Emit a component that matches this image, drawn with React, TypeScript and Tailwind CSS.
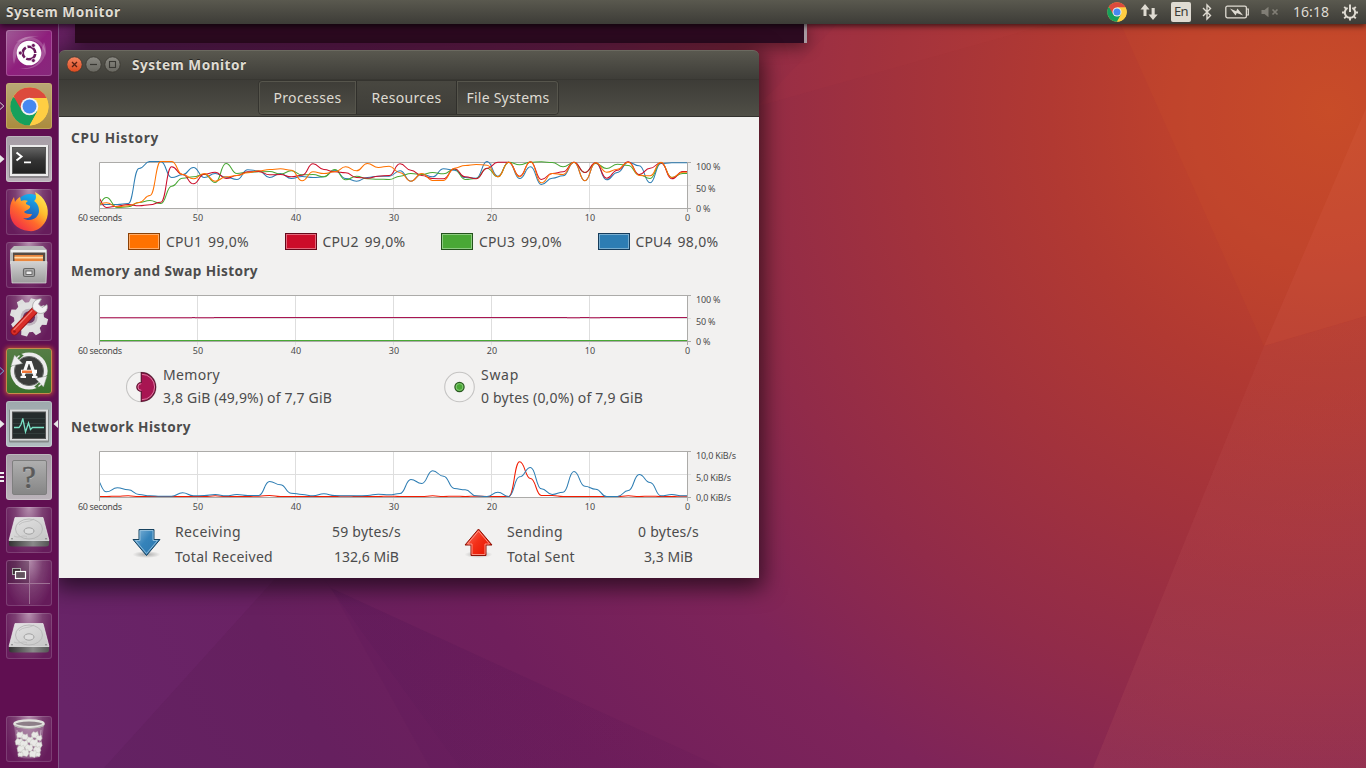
import { useLayoutEffect, useRef, type ReactNode } from "react";

/* Text set to a fixed advance width by adjusting its tracking. */
function Fit({ w, className = "", children }: { w: number; className?: string; children: string }) {
  const ref = useRef<HTMLSpanElement>(null);
  useLayoutEffect(() => {
    const el = ref.current;
    if (!el) return;
    el.style.letterSpacing = "0px";
    const natural = el.getBoundingClientRect().width;
    el.style.letterSpacing = `${(w - natural) / children.length}px`;
  }, [w, children]);
  return (
    <span ref={ref} className={`inline-block whitespace-pre ${className}`}>
      {children}
    </span>
  );
}

/* ---------- wallpaper ---------- */

function Wallpaper() {
  return (
    <svg className="absolute inset-0" width="1366" height="768" viewBox="0 0 1366 768">
      <defs>
        <radialGradient id="wall" gradientUnits="userSpaceOnUse" cx="1330" cy="110" r="1400">
          <stop offset="0" stopColor="#c64a28" />
          <stop offset="0.1" stopColor="#bf422c" />
          <stop offset="0.2" stopColor="#b13932" />
          <stop offset="0.31" stopColor="#a2323c" />
          <stop offset="0.43" stopColor="#912b49" />
          <stop offset="0.55" stopColor="#7e2459" />
          <stop offset="0.7" stopColor="#701f5c" />
          <stop offset="0.85" stopColor="#66205f" />
          <stop offset="1" stopColor="#632263" />
        </radialGradient>
        <linearGradient id="facetA" x1="0" y1="0" x2="0.3" y2="1">
          <stop offset="0" stopColor="#ffffff" stopOpacity="0" />
          <stop offset="1" stopColor="#ff9a80" stopOpacity="0.05" />
        </linearGradient>
        <linearGradient id="facetB" x1="0" y1="0" x2="1" y2="1">
          <stop offset="0" stopColor="#35104a" stopOpacity="0.09" />
          <stop offset="1" stopColor="#35104a" stopOpacity="0" />
        </linearGradient>
      </defs>
      <rect width="1366" height="768" fill="url(#wall)" />
      <polygon points="1110,0 1366,0 1366,108 1264,346" fill="#e0602a" opacity="0.09" />
      <polygon points="1366,108 1264,346 1366,316" fill="#ff8a60" opacity="0.11" />
      <polygon points="1264,346 1366,316 1366,768 1093,768" fill="url(#facetA)" />
      <polygon points="1264,346 1366,316 1366,768 1093,768" fill="#c65a5a" opacity="0.08" />
      <polygon points="860,0 1050,24 758,106" fill="#d05050" opacity="0.05" />
      <polygon points="59,540 310,540 104,768 59,768" fill="#8a2f86" opacity="0.14" />
      <polygon points="310,560 331,588 723,768 460,768" fill="url(#facetB)" />
      <polygon points="331,588 723,768 430,768" fill="#320a40" opacity="0.04" />
    </svg>
  );
}

/* ---------- top panel ---------- */

function ChromeMark({ size }: { size: number }) {
  return (
    <svg width={size} height={size} viewBox="0 0 40 40">
      <circle cx="20" cy="20" r="19.5" fill="#ffce43" />
      <path d="M20 20 L3.1 10.2 A19.5 19.5 0 0 0 20 39.5 L28 25Z" fill="#16a05c" />
      <path d="M3.6 9.5 A19.5 19.5 0 0 1 37.5 11.2 L20 11.2 L12 24Z" fill="#dc4a3d" />
      <path d="M20 11.2 H37.4 A19.5 19.5 0 0 1 20.3 39.5 L28 25Z" fill="#ffce43" />
      <circle cx="20" cy="20" r="9" fill="#f2f2f2" />
      <circle cx="20" cy="20" r="7.1" fill="#4688f1" />
    </svg>
  );
}

function TopPanel() {
  return (
    <header className="relative z-20 flex h-6 items-center bg-linear-to-b from-[#5a594f] to-[#3d3c37] pl-1.5 pr-2 text-[#dfdbd2] shadow-[0_2px_6px_rgba(0,0,0,0.65)]">
      <Fit w={114.5} className="text-[13.6px] leading-6 font-bold text-shadow-[0_-1px_0_rgb(0_0_0/0.5)]">
        System Monitor
      </Fit>
      <div className="ml-auto flex items-center">
        <div className="mr-[13px]">
          <ChromeMark size={20} />
        </div>
        <svg className="mr-[13px]" width="18" height="18" viewBox="0 0 18 18" fill="#dfdbd2">
          <path d="M5 1 L9.5 6.5 H6.5 V13 H3.5 V6.5 H.5Z" />
          <path d="M13 17 L17.7 11.5 H14.7 V5 H11.6 V11.5 H8.5Z" />
        </svg>
        <div className="mr-[11px] flex h-5 w-5 items-center justify-center rounded-xs bg-[#dfdbd2] text-[13px] text-[#3c3b37]">
          <Fit w={14}>En</Fit>
        </div>
        <svg className="mr-[13px]" width="10" height="18" viewBox="0 0 10 18" fill="none" stroke="#dfdbd2" strokeWidth="1.4">
          <path d="M1 5 L8.5 12.5 L5 16 V2 L8.5 5.5 L1 13" />
        </svg>
        <svg className="mr-[11px]" width="25" height="14" viewBox="0 0 25 14">
          <rect x="0.8" y="1.2" width="20.6" height="11.6" rx="1.6" fill="none" stroke="#dfdbd2" strokeWidth="1.3" />
          <path d="M21.5 4 h1.8 v6 h-1.8" fill="none" stroke="#dfdbd2" strokeWidth="1.2" />
          <path d="M5 3.6 L11.2 6.2 L12.4 3.4 L18.2 10.6 L11.8 8 L10.6 10.6Z" fill="#dfdbd2" />
        </svg>
        <svg className="mr-[14px] opacity-60" width="18" height="12" viewBox="0 0 18 12">
          <path d="M0.5 4 H3.5 L7.5 0.8 V11.2 L3.5 8 H0.5Z" fill="#a5a198" />
          <path d="M11.5 3.5 l5 5 m0 -5 l-5 5" stroke="#a5a198" strokeWidth="1.7" />
        </svg>
        <Fit w={36} className="mr-[13px] text-sm leading-6">
          16:18
        </Fit>
        <svg width="16" height="17" viewBox="0 0 16 17" stroke="#dfdbd2" fill="none">
          <path d="M5.6 3.9 A5.2 5.2 0 1 0 10.4 3.9" strokeWidth="2" />
          <path d="M8 0.6 V8" strokeWidth="2" />
          <path d="M0 8.5 H3 M13 8.5 H16 M2.2 14.3 L4.2 12.3 M13.8 14.3 L11.8 12.3 M8 13.8 V16.6 M2.2 2.8 L4.2 4.8 M13.8 2.8 L11.8 4.8" strokeWidth="1.9" />
        </svg>
      </div>
    </header>
  );
}

/* ---------- launcher ---------- */

const DASH = "border-white/20 bg-linear-to-br from-[#a05a97] via-[#8f1f7d] to-[#86287b]";
const PLAIN = "border-white/15 bg-[radial-gradient(ellipse_at_50%_0%,#b58fae_0%,#7c3f72_42%,#661c5b_80%)]";
const SILVER = "border-white/25 bg-linear-to-b from-[#a69da6] to-[#bbb3ba]";

function UbuntuIcon() {
  return (
    <svg width="46" height="46" viewBox="0 0 46 46">
      <path d="M8 34 C3 14 16 3 33 7 C20 6 11 12 11 23" fill="#fff" opacity="0.22" />
      <path d="M38 12 C45 27 31 43 13 38 C27 40 36 32 35 22" fill="#fff" opacity="0.22" />
      <path d="M10 12 C23 1 41 9 40 27 C38 15 29 9 21 10" fill="#fff" opacity="0.18" />
      <circle cx="23" cy="23" r="12.3" fill="#fff" />
      <circle cx="23" cy="23" r="6.3" fill="none" stroke="#6b1a5e" strokeWidth="2.6" strokeDasharray="11.5 1.7" strokeDashoffset="-1" />
      {[180, 60, 300].map((a) => (
        <circle key={a} cx={23 + 8.7 * Math.cos((a * Math.PI) / 180)} cy={23 + 8.7 * Math.sin((a * Math.PI) / 180)} r="2" fill="#6b1a5e" stroke="#fff" strokeWidth="0.7" />
      ))}
    </svg>
  );
}

function TerminalIcon() {
  return (
    <svg width="46" height="46" viewBox="0 0 46 46">
      <defs>
        <linearGradient id="term" x1="0" y1="0" x2="0" y2="1">
          <stop offset="0" stopColor="#646464" />
          <stop offset="0.5" stopColor="#333" />
          <stop offset="1" stopColor="#202020" />
        </linearGradient>
      </defs>
      <rect x="3" y="9" width="40" height="33" rx="1" fill="#8c888c" />
      <rect x="4" y="9" width="38" height="31" fill="#ececec" />
      <rect x="6.5" y="11.5" width="33" height="26" fill="url(#term)" stroke="#555" />
      <path d="M10.5 16.5 L15.5 20.5 L10.5 24.5" fill="none" stroke="#fff" strokeWidth="2" />
      <path d="M18 26.3 H25" stroke="#fff" strokeWidth="1.8" />
    </svg>
  );
}

function FirefoxIcon() {
  return (
    <svg width="46" height="46" viewBox="0 0 46 46">
      <defs>
        <linearGradient id="fox" x1="0.9" y1="0" x2="0.1" y2="1">
          <stop offset="0" stopColor="#fff15a" />
          <stop offset="0.35" stopColor="#ffbd2e" />
          <stop offset="0.6" stopColor="#ff6a2c" />
          <stop offset="1" stopColor="#ec1c4f" />
        </linearGradient>
        <linearGradient id="globe" x1="0.7" y1="0" x2="0.3" y2="1">
          <stop offset="0" stopColor="#15b8f5" />
          <stop offset="1" stopColor="#2445a8" />
        </linearGradient>
      </defs>
      <circle cx="24" cy="19" r="14" fill="url(#globe)" />
      <path
        d="M29 3 C39 8 44 19 41 29 C38 38 30 43 23 42 C10 41 3 32 4 20 C4 15 6 11 8 8 L9 13 C10 11 12 9 14 8 L15 12 C17 11 20 11 22 12 C20 13 20 14 20 15 L24 17 C25 20 20 21 18 23 C20 25 22 25 26 25 C25 29 20 30 17 29 C24 34 33 29 33 22 C33 17 31 14 28 12 C31 10 30 6 29 3Z"
        fill="url(#fox)"
      />
    </svg>
  );
}

function FilesIcon() {
  return (
    <svg width="46" height="46" viewBox="0 0 46 46">
      <defs>
        <linearGradient id="cab" x1="0" y1="0" x2="0" y2="1">
          <stop offset="0" stopColor="#d2d2d2" />
          <stop offset="1" stopColor="#9c9c9c" />
        </linearGradient>
      </defs>
      <path d="M8 4 H37 L41 8 V22 H4 V8Z" fill="#b9b9b9" />
      <path d="M5 8 H40 V10.6 H5Z" fill="#efefef" />
      <rect x="7" y="10.6" width="32" height="10" fill="#574b43" />
      <rect x="8.5" y="13" width="28.5" height="7" fill="#e9853b" />
      <path d="M8.5 15.6 H37" stroke="#ffdba9" strokeWidth="1.6" />
      <path d="M4.5 19.5 H41 L40 41 H6Z" fill="url(#cab)" stroke="#dcdcdc" strokeWidth="0.7" />
      <rect x="17.5" y="26.5" width="11" height="8" rx="1.5" fill="#aaa" stroke="#666" strokeWidth="1.2" />
      <rect x="20" y="29" width="6" height="3.5" fill="#ededed" stroke="#555" strokeWidth="0.8" />
    </svg>
  );
}

function SettingsIcon() {
  return (
    <svg width="46" height="46" viewBox="0 0 46 46">
      <g transform="translate(23 22.3)">
        {[15, 60, 105, 150].map((a) => (
          <path key={a} d="M-3 -19 H3 L4.6 -12 V12 L3 19 H-3 L-4.6 12 V-12Z" fill="#dedede" transform={`rotate(${a})`} />
        ))}
        <circle r="15" fill="#e1e1e1" />
        <circle r="8.5" fill="#bfb4be" />
        <circle r="6" fill="#6d3563" />
      </g>
      <path d="M8.5 36.5 L31 13" stroke="#9b1113" strokeWidth="7.6" strokeLinecap="round" />
      <path d="M8.5 36.5 L28.5 15.5" stroke="#d92e28" strokeWidth="6" strokeLinecap="round" />
      <path d="M8 34.5 L26 15.6" stroke="#f08176" strokeWidth="1.2" strokeLinecap="round" />
      <path d="M27 14 C25 8 30 3 35.5 4 L32.5 9 L36 12.5 L41 9.5 C43 15 38 20 32 18Z" fill="#f2f2f2" stroke="#999" strokeWidth="0.7" />
      <circle cx="8.5" cy="36.5" r="1.3" fill="#a31515" />
    </svg>
  );
}

function UpdaterIcon() {
  return (
    <svg width="46" height="46" viewBox="0 0 46 46">
      <circle cx="23" cy="23" r="18.6" fill="#ececec" />
      <circle cx="23" cy="23" r="14.6" fill="#3b3d3b" stroke="#6d716d" strokeWidth="1" />
      <path d="M4 18.5 L16 7.5 L13 6 M42 27.5 L30 38.5 L33 40" fill="none" stroke="#47783a" strokeWidth="2" />
      <path d="M5 18 L8.5 7 L16.5 15.5Z M41 28 L37.5 39 L29.5 30.5Z" fill="#efefef" stroke="#8b958b" strokeWidth="0.5" />
      <path d="M17 28 L21.5 14.5 H24.5 L29 28" fill="none" stroke="#f8f8f8" strokeWidth="3.2" />
      <path d="M15 23.6 H31" stroke="#fff" strokeWidth="3.6" />
      <path d="M16 23.8 H26" stroke="#ef7536" strokeWidth="2.4" />
      <path d="M14.5 29 H20 M26 29 H31.5" stroke="#f8f8f8" strokeWidth="2" />
    </svg>
  );
}

function MonitorIcon() {
  return (
    <svg width="46" height="46" viewBox="0 0 46 46">
      <rect x="3" y="8.5" width="40" height="33" rx="1" fill="#858a8a" />
      <rect x="4" y="8.5" width="38" height="31" fill="#d9dcdc" />
      <rect x="6.5" y="11" width="33" height="26.5" fill="#252c2c" stroke="#555" />
      <path d="M7 17.5 H39 M7 22.5 H39 M7 32.5 H39" stroke="#3b4a48" strokeWidth="0.6" />
      <path d="M8 26.5 H13 L15 23.5 L16.8 17.5 L19.5 31 L22.5 22 L24.5 28.5 L26.5 26.5 H38" fill="none" stroke="#79e0c4" strokeWidth="1.3" />
    </svg>
  );
}

function UnknownIcon() {
  return (
    <div className="flex h-[35px] w-[35px] items-center justify-center rounded-xs border border-[#7f7f7f] bg-linear-to-b from-[#b0b0b0] to-[#858585] bg-origin-border font-['Liberation_Serif',serif] text-[31px] leading-none text-[#5a5a5a] text-shadow-[0_1px_0_rgb(255_255_255/0.4)] [-webkit-text-stroke:0.6px_#5a5a5a]">
      ?
    </div>
  );
}

function DiskIcon() {
  return (
    <svg width="46" height="46" viewBox="0 0 46 46">
      <defs>
        <linearGradient id="disk" x1="0" y1="0" x2="1" y2="1">
          <stop offset="0" stopColor="#e4e4e4" />
          <stop offset="1" stopColor="#c5c5c5" />
        </linearGradient>
        <linearGradient id="diskEdge" x1="0" y1="0" x2="1" y2="0">
          <stop offset="0" stopColor="#333" />
          <stop offset="0.6" stopColor="#8a8a8a" />
          <stop offset="1" stopColor="#555" />
        </linearGradient>
      </defs>
      <path d="M3 33 H43 V37 Q43 39.5 40 39.5 H6 Q3 39.5 3 37Z" fill="url(#diskEdge)" />
      <path d="M9 10.5 H37 L43 33.5 H3Z" fill="url(#disk)" stroke="#ededed" strokeWidth="0.7" />
      <ellipse cx="23" cy="22" rx="13.5" ry="10" fill="none" stroke="#b2b2b2" strokeWidth="0.8" />
      <ellipse cx="23" cy="24" rx="5" ry="3.2" fill="#ddd" stroke="#9b9b9b" strokeWidth="0.9" />
      <path d="M28 12 C22 16 18 13 13 18 M8 29 C13 32 17 27 21 30" fill="none" stroke="#bababa" strokeWidth="0.8" />
      <circle cx="6" cy="31.8" r="0.8" fill="#777" />
      <circle cx="40" cy="31.8" r="0.8" fill="#777" />
    </svg>
  );
}

function WorkspaceIcon() {
  return (
    <svg width="46" height="46" viewBox="0 0 46 46">
      <rect x="1" y="1" width="22" height="22" fill="#3b1734" opacity="0.4" />
      <path d="M23.5 2 V44 M2 23.5 H44" stroke="#a981a1" strokeWidth="1" opacity="0.8" />
      <rect x="6.5" y="8.5" width="8" height="6" fill="#3c3035" stroke="#aaa" />
      <rect x="9.5" y="11.5" width="10" height="7" fill="#63525e" stroke="#fff" strokeWidth="1.2" />
    </svg>
  );
}

/* Centre and size of each crumpled ball of paper in the bin. */
const paper: [number, number, number][] = [
  [14, 19, 3.4], [19, 21, 3.2], [29, 19, 3.6], [33, 22, 3], [24, 24, 3.4], [13, 26, 3.8],
  [18, 28, 4], [28, 27, 4.2], [33, 29, 3.2], [23, 32, 4], [15, 33, 3.8], [31, 34, 3.8],
  [19, 37, 4], [27, 38, 3.8], [14.5, 38.5, 2.6], [32, 38.5, 2.4],
];

function TrashIcon() {
  return (
    <svg width="46" height="46" viewBox="0 0 46 46">
      <path d="M8 9 H38 L34 41 Q23 44 12 41Z" fill="#ccb8c9" opacity="0.35" />
      <path d="M11 14 L14 40 M35 14 L32 40" stroke="#e8dce6" strokeWidth="1" opacity="0.5" />
      <g fill="#e9e9e6" stroke="#c4c4be" strokeWidth="0.5">
        {paper.map(([x, y, r]) => (
          <path
            key={`${x}-${y}`}
            d={`M${x - r} ${y - r * 0.2} L${x - r * 0.5} ${y - r * 0.9} L${x + r * 0.2} ${y - r * 0.7} L${x + r * 0.7} ${y - r} L${x + r} ${y + r * 0.1} L${x + r * 0.5} ${y + r * 0.9} L${x - r * 0.3} ${y + r * 0.7} L${x - r * 0.8} ${y + r * 0.8}Z`}
          />
        ))}
      </g>
      <ellipse cx="23" cy="7.8" rx="14.6" ry="3.4" fill="#8d7f88" stroke="#e2e2de" strokeWidth="2.4" />
      <path d="M8 9.5 Q23 16 38 9.5" fill="none" stroke="#b2b2ad" strokeWidth="1.2" />
    </svg>
  );
}

type Running = "hollow" | "hollowBlue" | "solid" | "pips";

const items: { name: string; tile: string; icon: ReactNode; running?: Running; focused?: boolean }[] = [
  { name: "dash", tile: DASH, icon: <UbuntuIcon /> },
  { name: "chrome", tile: "border-[#cfb872]/60 bg-linear-to-b from-[#b9a877] to-[#ab8b3b]", icon: <ChromeMark size={39} />, running: "hollow" },
  { name: "terminal", tile: SILVER, icon: <TerminalIcon />, running: "solid" },
  { name: "firefox", tile: PLAIN, icon: <FirefoxIcon /> },
  { name: "files", tile: PLAIN, icon: <FilesIcon /> },
  { name: "settings", tile: PLAIN, icon: <SettingsIcon /> },
  { name: "updater", tile: "border-[#c98a4a] bg-linear-to-b from-[#567e46] to-[#39702c] shadow-[0_0_4px_1px_rgba(224,100,50,0.7)]", icon: <UpdaterIcon />, running: "hollowBlue" },
  { name: "monitor", tile: "border-white/25 bg-linear-to-b from-[#9ea8ac] to-[#b2bec1]", icon: <MonitorIcon />, running: "solid", focused: true },
  { name: "unknown", tile: SILVER, icon: <UnknownIcon />, running: "pips" },
  { name: "disk1", tile: PLAIN, icon: <DiskIcon /> },
  { name: "workspaces", tile: PLAIN, icon: <WorkspaceIcon /> },
  { name: "disk2", tile: PLAIN, icon: <DiskIcon /> },
];

function Indicator({ kind }: { kind: Running }) {
  return (
    <svg className="absolute top-[17px] left-0" width="5" height="12" viewBox="0 0 5 12">
      {kind === "solid" && <path d="M0 2 L4.5 6 L0 10Z" fill="#e8e8e8" />}
      {kind === "hollow" && <path d="M0 2.5 L3.8 6 L0 9.5" fill="none" stroke="#ddd" />}
      {kind === "hollowBlue" && <path d="M0 2.5 L3.8 6 L0 9.5" fill="none" stroke="#6fb4dd" />}
      {kind === "pips" && <path d="M0 2 H4 M0 6 H4 M0 10 H4" stroke="#eee" strokeWidth="2" />}
    </svg>
  );
}

function Tile({ tile, icon }: { tile: string; icon: ReactNode }) {
  return (
    <div className={`flex h-[46px] w-[46px] items-center justify-center overflow-hidden rounded-[3px] border bg-origin-border ${tile}`}>
      <div className="shrink-0">{icon}</div>
    </div>
  );
}

function Launcher() {
  return (
    <nav className="relative z-10 flex w-[59px] flex-col border-r border-[#815184] bg-[#600f51] pt-1.5 pb-1.5">
      <ul className="flex flex-col gap-[7px]">
        {items.map((it) => (
          <li key={it.name} className="relative flex pl-1.5">
            {it.running && <Indicator kind={it.running} />}
            <Tile tile={it.tile} icon={it.icon} />
            {it.focused && (
              <svg className="absolute top-[17px] right-0" width="5" height="12" viewBox="0 0 5 12">
                <path d="M5 2 L0.5 6 L5 10Z" fill="#e8e8e8" />
              </svg>
            )}
          </li>
        ))}
      </ul>
      <div className="mt-auto pl-1.5">
        <Tile tile={PLAIN} icon={<TrashIcon />} />
      </div>
    </nav>
  );
}

/* ---------- charts ---------- */

/* Samples are stored in thirds of a pixel, counted down from the top of the page area. */
const CPU = {
  orange: [165, 158, 170, 167, 157, 136, 34, 34, 73, 86, 70, 93, 80, 76, 68, 62, 58, 56, 60, 92, 65, 70, 65, 50, 62, 40, 52, 48, 68, 93, 70, 91, 91, 54, 46, 43, 45, 80, 36, 80, 35, 98, 70, 73, 36, 92, 38, 66, 57, 36, 76, 77, 36, 82, 66, 66],
  red: [135, 172, 168, 163, 167, 164, 156, 50, 73, 101, 72, 66, 85, 76, 65, 64, 74, 73, 80, 75, 41, 58, 65, 68, 82, 84, 78, 76, 41, 60, 76, 85, 86, 56, 80, 86, 55, 36, 36, 78, 35, 88, 70, 65, 36, 67, 38, 84, 60, 35, 73, 54, 38, 86, 64, 64],
  green: [172, 142, 172, 170, 157, 151, 160, 108, 84, 80, 72, 97, 40, 70, 66, 65, 64, 72, 62, 74, 73, 80, 58, 89, 78, 86, 87, 88, 78, 70, 73, 67, 71, 57, 88, 85, 54, 80, 36, 44, 36, 35, 37, 50, 37, 67, 40, 55, 42, 46, 74, 85, 38, 82, 70, 70],
  blue: [165, 163, 163, 160, 55, 34, 34, 82, 74, 52, 82, 70, 81, 88, 59, 62, 82, 70, 85, 79, 82, 80, 60, 85, 93, 82, 78, 78, 62, 93, 72, 80, 56, 60, 82, 84, 34, 78, 36, 85, 50, 103, 84, 77, 36, 92, 38, 89, 67, 36, 47, 98, 40, 38, 38, 38],
};
const NET = {
  received: [176, 215, 203, 209, 223, 227, 228, 228, 218, 227, 226, 223, 227, 223, 226, 226, 184, 194, 219, 223, 227, 221, 226, 227, 227, 226, 222, 224, 220, 178, 190, 152, 168, 205, 209, 227, 229, 216, 229, 170, 142, 206, 223, 216, 154, 198, 207, 229, 229, 211, 163, 187, 227, 223, 227, 227],
  sent: [229, 229, 228, 227, 229, 229, 229, 229, 229, 229, 229, 227, 229, 229, 229, 228, 226, 229, 229, 229, 229, 229, 229, 228, 229, 229, 229, 228, 229, 229, 229, 227, 229, 228, 229, 228, 229, 229, 229, 125, 175, 226, 226, 229, 229, 229, 229, 229, 229, 227, 229, 228, 229, 229, 228, 229],
};

const STEP = 10.873;
const FIRST = 36.57;

function trace(samples: number[], base: number) {
  const y = (v: number) => 49.5 - (base - v) / 3;
  let d = `M${FIRST} ${y(samples[0])}`;
  for (let i = 1; i < samples.length; i++) {
    const x = FIRST + i * STEP;
    const mid = x - STEP / 2;
    d += ` C${mid} ${y(samples[i - 1])} ${mid} ${y(samples[i])} ${x} ${y(samples[i])}`;
  }
  return d;
}

const ticks = [
  { x: 138.5, label: "50" },
  { x: 236.5, label: "40" },
  { x: 334.5, label: "30" },
  { x: 432.5, label: "20" },
  { x: 530.5, label: "10" },
];

function Chart({ id, scale, children }: { id: string; scale: { text: string; w: number }[]; children: ReactNode }) {
  return (
    <svg className="block shrink-0 font-['Noto_Sans','Open_Sans',sans-serif]" width="700" height="67" viewBox="0 0 700 67">
      <clipPath id={id}>
        <rect x="41" y="2" width="587" height="48" />
      </clipPath>
      <rect x="40.5" y="3.5" width="588" height="46" fill="#fff" />
      <path d="M41 26.5 H632" stroke="#dedede" />
      {ticks.map((t) => (
        <path key={t.label} d={`M${t.x} 4 V53`} stroke="#dedede" />
      ))}
      <path d="M40.5 53 V3.5 H632 M40.5 49.5 H632 M628.5 3.5 V53" fill="none" stroke="#acaba9" />
      <g clipPath={`url(#${id})`} fill="none" strokeWidth="1.05">
        {children}
      </g>
      <g fill="#4c4c4c" fontSize="9">
        <text x="19" y="62" textLength="44">60 seconds</text>
        {ticks.map((t) => (
          <text key={t.label} x={t.x + 0.5} y="62" textAnchor="middle">{t.label}</text>
        ))}
        <text x="628.5" y="62" textAnchor="middle">0</text>
        {scale.map((s, i) => (
          <text key={s.text} x="637" y={[11, 33, 53][i]} textLength={s.w}>{s.text}</text>
        ))}
      </g>
    </svg>
  );
}

const percent = [
  { text: "100 %", w: 24.5 },
  { text: "50 %", w: 19.5 },
  { text: "0 %", w: 14.5 },
];
const rate = [
  { text: "10,0 KiB/s", w: 40 },
  { text: "5,0 KiB/s", w: 35 },
  { text: "0,0 KiB/s", w: 35 },
];

/* ---------- window ---------- */

function TitleBar() {
  return (
    <div className="flex h-[29px] items-start rounded-t-[6px] border-t border-[#6b6a60] bg-linear-to-b from-[#59584f] to-[#3e3d38] pl-2">
      <svg className="mt-[5px]" width="54" height="17" viewBox="0 0 54 17">
        <defs>
          <linearGradient id="close" x1="0" y1="0" x2="0" y2="1">
            <stop offset="0" stopColor="#f48662" />
            <stop offset="1" stopColor="#dd4a1e" />
          </linearGradient>
          <linearGradient id="grey" x1="0" y1="0" x2="0" y2="1">
            <stop offset="0" stopColor="#8b8a83" />
            <stop offset="1" stopColor="#686760" />
          </linearGradient>
        </defs>
        <circle cx="7.5" cy="8.5" r="7.7" fill="url(#close)" stroke="#37352f" strokeWidth="0.8" />
        <path d="M5 6 l5 5 m0 -5 l-5 5" stroke="#552013" strokeWidth="1.3" />
        <circle cx="26.5" cy="8.5" r="7.7" fill="url(#grey)" stroke="#37352f" strokeWidth="0.8" />
        <path d="M23 8.5 h7" stroke="#393833" strokeWidth="1.2" />
        <circle cx="45.5" cy="8.5" r="7.7" fill="url(#grey)" stroke="#37352f" strokeWidth="0.8" />
        <rect x="42.5" y="5.5" width="6" height="6" fill="none" stroke="#393833" strokeWidth="1.1" />
      </svg>
      <Fit w={114.5} className="ml-[11px] text-[13.6px] leading-7 font-bold text-[#dfdbd2] text-shadow-[0_-1px_0_rgb(0_0_0/0.5)]">
        System Monitor
      </Fit>
    </div>
  );
}

function TabBar() {
  return (
    <div className="flex h-[38px] items-start border-t border-b border-t-[#383732] border-b-[#33322e] bg-linear-to-b from-[#3d3c37] to-[#504f47] pl-[199px] text-sm text-[#dfdbd2]">
      <div className="flex h-[35px] w-[301px] overflow-hidden rounded-[4px] border border-[#35342f]">
        <div className="flex w-[97px] items-center justify-center rounded-l-[3px] shadow-[inset_0_0_0_1px_#56554c]">
          <Fit w={68}>Processes</Fit>
        </div>
        <div className="flex w-[101px] items-center justify-center border-x border-[#302f2b] bg-linear-to-b from-[#484740] to-[#3f3e39]">
          <Fit w={70}>Resources</Fit>
        </div>
        <div className="flex flex-1 items-center justify-center rounded-r-[3px] pl-px shadow-[inset_0_0_0_1px_#56554c]">
          <Fit w={83}>File Systems</Fit>
        </div>
      </div>
    </div>
  );
}

function Heading({ w, className, children }: { w: number; className: string; children: string }) {
  return (
    <h2 className={`flex shrink-0 items-center pl-3 text-[13.6px] font-bold ${className}`}>
      <Fit w={w}>{children}</Fit>
    </h2>
  );
}

const cores = [
  { name: "CPU1", value: "99,0%", color: "border-[#8a4106] bg-[#ff7200] shadow-[inset_0_0_0_1px_#ffab67]" },
  { name: "CPU2", value: "99,0%", color: "border-[#64081a] bg-[#cc0c29] shadow-[inset_0_0_0_1px_#e2687b]" },
  { name: "CPU3", value: "99,0%", color: "border-[#23521c] bg-[#49a835] shadow-[inset_0_0_0_1px_#8dcb80]" },
  { name: "CPU4", value: "98,0%", color: "border-[#163c5b] bg-[#2d7db3] shadow-[inset_0_0_0_1px_#79aed0]" },
];

function Transfer({ icon, rows, valueWidth, className }: { icon: ReactNode; rows: { label: string; lw: number; value: string; vw: number }[]; valueWidth: string; className: string }) {
  return (
    <div className={`flex ${className}`}>
      <div className="mt-[9px] w-[43px] shrink-0">{icon}</div>
      <div className="flex-1">
        {rows.map((r) => (
          <div key={r.label} className="flex h-[25px] items-center justify-between">
            <Fit w={r.lw}>{r.label}</Fit>
            <div className={`flex justify-center ${valueWidth}`}>
              <Fit w={r.vw}>{r.value}</Fit>
            </div>
          </div>
        ))}
      </div>
    </div>
  );
}

function Arrow({ up }: { up?: boolean }) {
  const id = up ? "arrowUp" : "arrowDown";
  const d = up ? "M14.5 1 L28 17 H22 V27.5 H7 V17 H1Z" : "M7 1.5 H22 V11.5 H28 L14.5 27.5 L1 11.5 H7Z";
  const inner = up ? "M14.5 3 L25.5 16 H21 V26.5 H8 V16 H3.5Z" : "M8 2.5 H21 V12.5 H25.5 L14.5 25.5 L3.5 12.5 H8Z";
  return (
    <svg width="30" height="34" viewBox="0 0 30 34">
      <defs>
        <linearGradient id={id} x1="0" y1="0" x2="1" y2="0.8">
          <stop offset="0" stopColor={up ? "#fb7a6a" : "#8dbcdd"} />
          <stop offset="0.5" stopColor={up ? "#f43119" : "#3583ba"} />
          <stop offset="1" stopColor={up ? "#e51400" : "#2c77ae"} />
        </linearGradient>
        <radialGradient id={`${id}Shade`}>
          <stop offset="0" stopColor="#000" stopOpacity="0.3" />
          <stop offset="1" stopColor="#000" stopOpacity="0" />
        </radialGradient>
      </defs>
      <ellipse cx="14.5" cy="26.5" rx="14" ry="3.5" fill={`url(#${id}Shade)`} />
      <path d={d} fill={`url(#${id})`} stroke={up ? "#8a1207" : "#17425f"} />
      <path d={inner} fill="none" stroke={up ? "#ff9b8c" : "#96c2de"} strokeWidth="0.9" />
    </svg>
  );
}

function MonitorWindow() {
  return (
    <section className="absolute top-[50px] left-[59px] flex h-[528px] w-[700px] flex-col rounded-t-[6px] shadow-[0_6px_22px_4px_rgba(0,0,0,0.6)]">
      <TitleBar />
      <TabBar />
      <div className="flex flex-1 flex-col bg-[#f2f1f0] text-sm text-[#4c4c4c]">
        <Heading w={88} className="h-[42px]">CPU History</Heading>
        <Chart id="cpuClip" scale={percent}>
          <path d={trace(CPU.blue, 175)} stroke="#2d7db3" />
          <path d={trace(CPU.green, 175)} stroke="#49a835" />
          <path d={trace(CPU.red, 175)} stroke="#cc0c29" />
          <path d={trace(CPU.orange, 175)} stroke="#ff7200" />
        </Chart>
        <div className="flex h-8 shrink-0 items-start pt-1.5 pl-[69px]">
          {cores.map((c) => (
            <div key={c.name} className="flex w-[156.5px] items-center">
              <div className={`-mt-px mr-1.5 h-[17px] w-8 border ${c.color}`} />
              <Fit w={36} className="mr-[6px]">{c.name}</Fit>
              <Fit w={41}>{c.value}</Fit>
            </div>
          ))}
        </div>
        <Heading w={187} className="mb-2 h-[26px]">Memory and Swap History</Heading>
        <Chart id="memClip" scale={percent}>
          <path d="M41 25.5 H628" stroke="#a81552" />
          <path d="M41 26.1 H133 M136 26.1 H155 M508 26.1 H521 M530 26.1 H541" stroke="#d98cab" strokeWidth="0.9" />
          <path d="M41 48.5 H629" stroke="#49a835" strokeWidth="1.2" />
        </Chart>
        <div className="flex h-[55px] shrink-0 items-start pt-1 pl-[67px] leading-[23px]">
          <div className="flex w-[318px] items-center">
            <svg className="mt-px mr-[6px]" width="31" height="32" viewBox="0 0 31 32">
              <circle cx="15.3" cy="16" r="14.8" fill="#f4f3f2" stroke="#c5c4c3" strokeWidth="1.1" />
              <path d="M15.3 1.7 A14.3 14.3 0 0 1 15.3 30.3 V20.5 A4.5 4.5 0 0 1 15.3 11.5Z" fill="#a81552" stroke="#5d1532" strokeWidth="1.2" />
              <path d="M15.9 3.3 A12.7 12.7 0 0 1 15.9 28.7 M15.3 19.3 A3.3 3.3 0 0 1 15.3 12.7" fill="none" stroke="#e487ab" strokeWidth="0.9" />
            </svg>
            <div className="flex flex-col items-start">
              <Fit w={57}>Memory</Fit>
              <Fit w={169}>3,8 GiB (49,9%) of 7,7 GiB</Fit>
            </div>
          </div>
          <div className="flex items-center">
            <svg className="mt-px mr-[6px]" width="31" height="32" viewBox="0 0 31 32">
              <circle cx="15.5" cy="16" r="14.8" fill="#f4f3f2" stroke="#c5c4c3" strokeWidth="1.1" />
              <circle cx="15.5" cy="16" r="4.6" fill="#49a835" stroke="#29561f" strokeWidth="1.2" />
              <circle cx="15.5" cy="16" r="3.4" fill="none" stroke="#8dcb80" strokeWidth="0.9" />
            </svg>
            <div className="flex flex-col items-start">
              <Fit w={38}>Swap</Fit>
              <Fit w={162}>0 bytes (0,0%) of 7,9 GiB</Fit>
            </div>
          </div>
        </div>
        <Heading w={120} className="mb-2 h-[26px]">Network History</Heading>
        <Chart id="netClip" scale={rate}>
          <path d={trace(NET.sent, 232)} stroke="#f21b00" />
          <path d={trace(NET.received, 232)} stroke="#2d7db3" />
        </Chart>
        <div className="flex pt-1 pl-[73px]">
          <Transfer
            className="w-[269px]"
            valueWidth="w-[69px]"
            icon={<Arrow />}
            rows={[
              { label: "Receiving", lw: 66, value: "59 bytes/s", vw: 69 },
              { label: "Total Received", lw: 98, value: "132,6 MiB", vw: 65 },
            ]}
          />
          <Transfer
            className="ml-[63px] w-[235px]"
            valueWidth="w-[61px]"
            icon={<Arrow up />}
            rows={[
              { label: "Sending", lw: 56, value: "0 bytes/s", vw: 61 },
              { label: "Total Sent", lw: 68, value: "3,3 MiB", vw: 49 },
            ]}
          />
        </div>
      </div>
    </section>
  );
}

export default function App() {
  return (
    <div className="relative flex h-[768px] w-[1366px] flex-col overflow-hidden bg-[#701f5c] font-['Noto_Sans','Open_Sans',sans-serif]">
      <Wallpaper />
      <div className="absolute top-6 left-[75px] h-[19px] w-[732px] border-r-3 border-[#a89aa1] bg-[#2c0a20] shadow-[0_4px_16px_rgba(0,0,0,0.45)]" />
      <TopPanel />
      <div className="flex flex-1">
        <Launcher />
      </div>
      <MonitorWindow />
    </div>
  );
}
